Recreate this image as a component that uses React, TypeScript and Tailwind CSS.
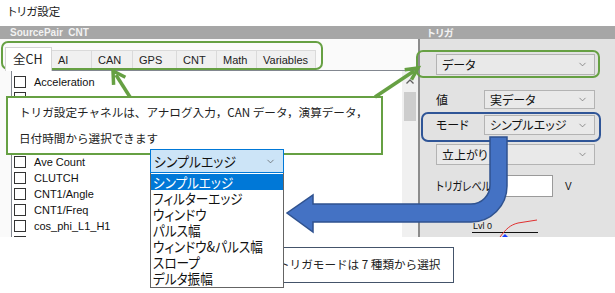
import { ChevronDown } from 'lucide-react';

const jp = "font-['Noto_Sans_CJK_JP','Noto_Sans',sans-serif]";
const palt = "[font-feature-settings:'palt']";

const tabs = [
  { label: '全CH', w: 'w-[47px]', active: true },
  { label: 'AI', w: 'w-[40px]' },
  { label: 'CAN', w: 'w-[41px]' },
  { label: 'GPS', w: 'w-[44px]' },
  { label: 'CNT', w: 'w-[40px]' },
  { label: 'Math', w: 'w-[40px]' },
  { label: 'Variables', w: 'w-[59px]' },
];

// rows hidden under the callout keep only their box
const channels = [
  'Acceleration',
  '',
  '',
  '',
  '',
  'Ave Count',
  'CLUTCH',
  'CNT1/Angle',
  'CNT1/Freq',
  'cos_phi_L1_H1',
  '',
];

const modes = [
  'シンプルエッジ',
  'フィルターエッジ',
  'ウィンドウ',
  'パルス幅',
  'ウィンドウ&パルス幅',
  'スロープ',
  'デルタ振幅',
];

function Select({ value, className }: { value: string; className: string }) {
  return (
    <div
      className={`flex items-center justify-between border border-[#b3b3b3] bg-[#e9e9e9] pl-[5px] pr-[6px] text-[12px] text-[#111] ${jp} ${palt} ${className}`}
    >
      <span>{value}</span>
      <ChevronDown size={11} strokeWidth={1.5} color="#666" />
    </div>
  );
}

export default function App() {
  return (
    <div className="relative w-[615px] h-[293px] overflow-hidden bg-white">
      <div className={`h-[26px] pl-[8px] pt-[3px] text-[11.5px] text-[#222] ${jp} ${palt}`}>トリガ設定</div>

      {/* captured window */}
      <div className="flex h-[211px] flex-col">
        <div className="flex h-[13px] bg-[#a6a6a6] text-[10px] font-bold leading-[13px] text-[#f2f2f2]">
          <div className="w-[420px] pl-[10px] font-['Liberation_Sans',sans-serif]">SourcePair&nbsp;&nbsp;CNT</div>
          <div className={`pl-[7px] ${jp} ${palt}`}>トリガ</div>
        </div>

        <div className="flex min-h-0 flex-1">
          {/* left: channel list */}
          <div className="flex w-[418px] flex-col bg-[#fafafa]">
            <div className="flex h-[31px] items-end pl-[5px] font-['Liberation_Sans',sans-serif] text-[11px] text-[#222]">
              {tabs.map((t) =>
                t.active ? (
                  <div
                    key={t.label}
                    className={`${t.w} relative z-10 -mb-px flex h-[24px] items-center border border-b-0 border-[#d4d4d4] bg-white pl-[7px] text-[12.5px] ${jp}`}
                  >
                    {t.label}
                  </div>
                ) : (
                  <div
                    key={t.label}
                    className={`${t.w} flex h-[20px] items-center border border-l-0 border-[#dadada] bg-[#f0f0f0] pl-[6px]`}
                  >
                    {t.label}
                  </div>
                )
              )}
            </div>
            <div className="ml-[11px] flex min-h-0 flex-1 border-l border-t border-[#828790] bg-white">
              <div className="flex-1 overflow-hidden pl-[2px] pt-[3px] font-['Liberation_Sans',sans-serif] text-[11px] text-[#111]">
                {channels.map((c, i) => (
                  <div key={i} className="flex h-[16px] items-center gap-[8px]">
                    <div className="h-[12px] w-[12px] border border-[#333] bg-white" />
                    {c && <span>{c}</span>}
                  </div>
                ))}
              </div>
              <div className="flex w-[16px] flex-col items-center bg-[#f0f0f0] pt-[8px]">
                <svg width="8" height="5" viewBox="0 0 8 5">
                  <path d="M0.5 4.5 L4 1 L7.5 4.5" fill="none" stroke="#606060" strokeWidth="1.3" />
                </svg>
                <div className="mt-[8px] h-[29px] w-[12px] bg-[#cdcdcd]" />
              </div>
            </div>
          </div>
          <div className="w-[2px] bg-[#8c8c8c]" />

          {/* right: trigger settings */}
          <div className={`flex-1 bg-[#e2e2e2] pl-[16px] pt-[15px] ${jp} ${palt} text-[12px] text-[#111]`}>
            <Select value="データ" className="h-[21px] w-[159px]" />
            <div className="mt-[15px] flex h-[19px] w-[159px] items-center justify-between">
              <span>値</span>
              <Select value="実データ" className="h-[19px] w-[111px]" />
            </div>
            <div className="mt-[6px] flex h-[20px] w-[159px] items-center justify-between">
              <span>モード</span>
              <Select value="シンプルエッジ" className="h-[20px] w-[111px]" />
            </div>
            <Select value="立上がり" className="mt-[9px] h-[21px] w-[159px]" />
            <div className="mt-[10px] flex h-[22px] items-center">
              <div className="w-[64px]">
                <span className="inline-block origin-left scale-x-[0.86] whitespace-nowrap">トリガレベル</span>
              </div>
              <div className="h-[22px] w-[53px] border border-[#9a9a9a] bg-white" />
              <span className="ml-[12px] font-['Liberation_Sans',sans-serif] text-[10px]">V</span>
            </div>
            <svg className="mt-[20px] ml-[36px]" width="70" height="20" viewBox="0 0 70 20">
              <text x="1" y="12" fontSize="9" fontFamily="Liberation Sans, sans-serif" fill="#111">Lvl 0</text>
              <line x1="0" y1="15.5" x2="66" y2="15.5" stroke="#111" strokeWidth="1" />
              <path d="M28 20 C 34 12, 38 8, 46 6 L 65 3" fill="none" stroke="#e03030" strokeWidth="1" />
              <path d="M33 17 L36 20 L30 20 Z" fill="#1a3cff" />
            </svg>
          </div>
        </div>
      </div>

      {/* highlight frames */}
      <div className="absolute left-[1px] top-[41px] h-[29px] w-[322px] rounded-[7px] border-2 border-[#66a043]" />
      <div className="absolute left-[416px] top-[50px] h-[28px] w-[184px] rounded-[7px] border-2 border-[#66a043]" />
      <div className="absolute left-[421px] top-[112px] h-[30px] w-[180px] rounded-[7px] border-2 border-[#2f5597]" />

      {/* callout: channels */}
      <div className={`absolute left-[6px] top-[96px] h-[59px] w-[377px] border-2 border-[#66a043] bg-white pl-[11px] pt-[1px] text-[11.6px] leading-[26px] text-[#222] ${jp}`}>
        <div>トリガ設定チャネルは、アナログ入力，CAN データ，演算データ，</div>
        <div>日付時間から選択できます</div>
      </div>

      {/* arrows */}
      <svg className="absolute left-0 top-0" width="615" height="293" viewBox="0 0 615 293">
        <line x1="130" y1="97" x2="116" y2="75" stroke="#66a043" strokeWidth="3.5" />
        <polyline points="125.4,77.3 113,71 113.6,84.9" fill="none" stroke="#66a043" strokeWidth="3.5" />
        <line x1="375" y1="97" x2="414" y2="71" stroke="#66a043" strokeWidth="3.5" />
        <polyline points="411.5,79.7 418,68 404.7,69.7" fill="none" stroke="#66a043" strokeWidth="3.5" />
        <path
          d="M 490 137 L 507 137 L 507 186 A 36 36 0 0 1 471 222 L 313 222 L 313 232 L 287 213 L 313 195 L 313 204 L 471 204 A 19 19 0 0 0 490 185 Z"
          fill="#4472c4"
          stroke="#2f528f"
          strokeWidth="1.5"
        />
      </svg>

      {/* callout: modes */}
      <div className={`absolute left-[265px] top-[247px] flex h-[36px] w-[189px] items-center border-[1.5px] border-[#44546a] bg-white pl-[12px] text-[11.6px] text-[#222] ${jp}`}>
        トリガモードは 7 種類から選択
      </div>

      {/* mode dropdown popup */}
      <div className={`absolute left-[150px] top-[149px] w-[134px] ${jp} ${palt} text-[14px] text-[#111]`}>
        <div className="flex h-[24px] items-center justify-between border border-[#0078d7] bg-[#cce4f7] pl-[3px] pr-[7px]">
          <span className="inline-block origin-left scale-x-[0.92]">シンプルエッジ</span>
          <ChevronDown size={11} strokeWidth={1.5} color="#555" />
        </div>
        <div className="border border-t-0 border-[#646464] bg-white pb-[1px] pt-[1px]">
          {modes.map((m, i) => (
            <div
              key={m}
              className={`flex h-[16px] items-center pl-[2px] leading-[16px] ${i === 0 ? 'bg-[#0078d7] text-white' : ''}`}
            >
              <span className="inline-block origin-left scale-x-[0.9] whitespace-nowrap">{m}</span>
            </div>
          ))}
        </div>
      </div>
    </div>
  );
}
